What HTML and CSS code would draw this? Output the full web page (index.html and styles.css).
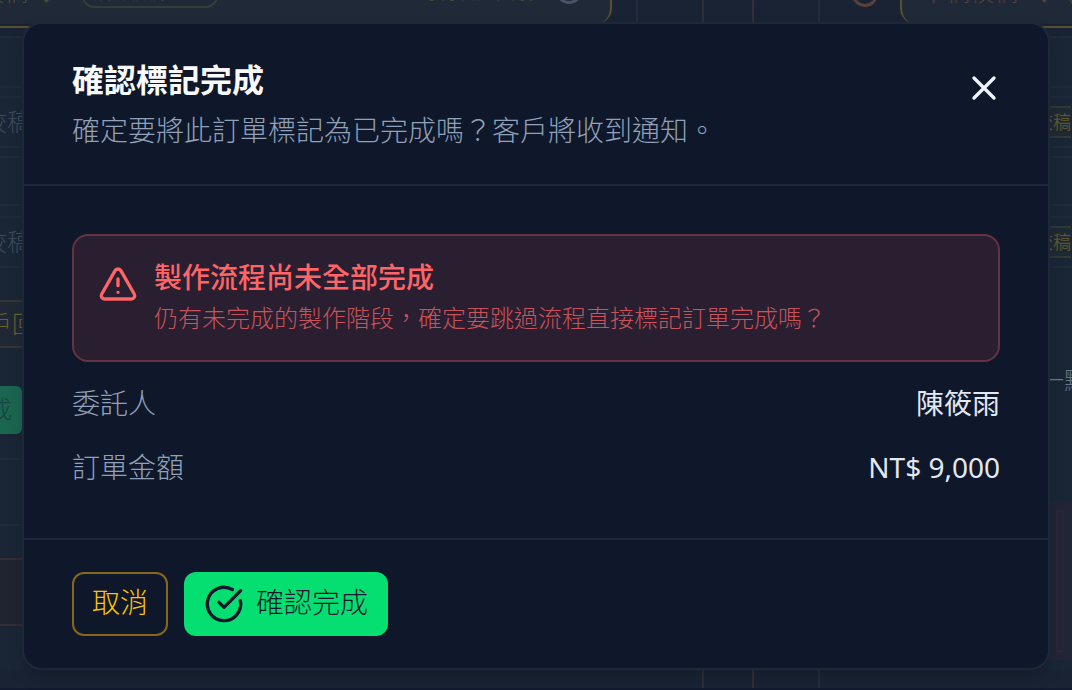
FILE: index.html
```html
<!DOCTYPE html>
<html lang="zh-Hant">
<head>
  <meta charset="UTF-8">
  <meta name="viewport" content="width=device-width, initial-scale=1.0">
  <title>確認標記完成</title>
  <link rel="stylesheet" href="styles.css">
</head>
<body>
  <!-- Order board behind the dialog -->
  <div class="board" aria-hidden="true">
    <div class="board-top">
      <div class="stage-card stage-left">
        <span class="stage-name">校稿 ↓</span>
        <span class="pill">設計校稿：1/1</span>
        <span class="stage-note">等待客戶回覆</span>
        <span class="ring"></span>
      </div>
      <div class="lanes">
        <span class="lane lane-a"></span>
        <span class="lane lane-b"></span>
        <span class="lane lane-c"></span>
        <span class="lane lane-d"></span>
        <span class="ring ring-orange"></span>
      </div>
      <div class="stage-card stage-right">
        <span class="stage-name">下稿校稿</span>
        <span class="stage-name">↓</span>
        <span class="ring ring-olive"></span>
      </div>
    </div>
    <div class="board-middle">
      <div class="side side-left">
        <div class="cell cell-first"></div>
        <div class="cell cell-text">校稿</div>
        <div class="cell"></div>
        <div class="cell cell-text">校稿</div>
        <div class="cell cell-reply">戶回</div>
        <div class="cell-done">成</div>
        <div class="cell cell-notes"></div>
        <div class="cell-brown"></div>
      </div>
      <div class="side side-right">
        <div class="cell cell-first"></div>
        <div class="cell cell-tag"><span>校稿</span></div>
        <div class="cell"></div>
        <div class="cell cell-tag"><span>校稿</span></div>
        <div class="cell-point">一點</div>
        <div class="cell-plum"></div>
      </div>
    </div>
    <div class="board-bottom">
      <span class="lane lane-b"></span>
      <span class="lane lane-c"></span>
      <span class="lane lane-d"></span>
    </div>
  </div>

  <!-- Confirm dialog -->
  <div class="dialog" role="dialog" aria-modal="true" aria-labelledby="dialogTitle" aria-describedby="dialogText">
    <header class="dialog-header">
      <div class="dialog-heading">
        <h2 id="dialogTitle">確認標記完成</h2>
        <p id="dialogText">確定要將此訂單標記為已完成嗎？客戶將收到通知。</p>
      </div>
      <button class="close-button" type="button" aria-label="關閉">
        <svg viewBox="0 0 24 24"><path d="M18 6 6 18M6 6l12 12"/></svg>
      </button>
    </header>

    <div class="dialog-body">
      <div class="alert">
        <svg viewBox="0 0 24 24"><path d="m21.73 18-8-14a2 2 0 0 0-3.48 0l-8 14A2 2 0 0 0 4 21h16a2 2 0 0 0 1.73-3"/><path d="M12 9v4M12 17h.01"/></svg>
        <div>
          <h3>製作流程尚未全部完成</h3>
          <p>仍有未完成的製作階段，確定要跳過流程直接標記訂單完成嗎？</p>
        </div>
      </div>
      <dl class="details">
        <div class="detail-row">
          <dt>委託人</dt>
          <dd>陳筱雨</dd>
        </div>
        <div class="detail-row">
          <dt>訂單金額</dt>
          <dd>NT$ 9,000</dd>
        </div>
      </dl>
    </div>

    <footer class="dialog-footer">
      <button class="btn btn-cancel" type="button"><span>取消</span></button>
      <button class="btn btn-confirm" type="button">
        <svg viewBox="0 0 24 24"><path d="M21.801 10A10 10 0 1 1 17 3.335"/><path d="m9 11 3 3L22 4"/></svg>
        <span>確認完成</span>
      </button>
    </footer>
  </div>
</body>
</html>
```

FILE: styles.css
```css
* {
  box-sizing: border-box;
}
body {
  margin: 0;
  padding: 22px;
  background: #192334;
  color: #e2e8f0;
  font-family: "Noto Sans", "Noto Sans CJK TC", sans-serif;
  font-size: 28px;
  font-weight: 300;
}
h2, h3, p, dl, dt, dd {
  margin: 0;
}
svg {
  fill: none;
  stroke: currentColor;
  stroke-width: 2;
  stroke-linecap: round;
  stroke-linejoin: round;
  flex-shrink: 0;
}

/* Board behind */
.board {
  position: absolute;
  inset: 0;
  overflow: hidden;
  display: flex;
  flex-direction: column;
  color: #3f4b5c;
  font-size: 24px;
  line-height: 32px;
  white-space: nowrap;
}
.board-top {
  display: flex;
  height: 28px;
  border-bottom: 2px solid #5a5030;
}
.stage-card {
  display: flex;
  align-items: flex-end;
  height: 24px;
  padding-bottom: 16px;
  background: #1f2937;
  color: #4b5030;
}
.stage-left {
  width: 612px;
  flex-shrink: 0;
  border-right: 2px solid #5a5030;
  border-radius: 0 0 16px 0;
}
.stage-name {
  width: 82px;
  flex-shrink: 0;
}
.stage-left .stage-name {
  text-indent: -20px;
}
.pill {
  width: 136px;
  padding: 0 9px;
  border: 2px solid #343e38;
  border-radius: 12px;
  color: #3f493b;
  font-size: 18px;
  line-height: 28px;
}
.stage-note {
  flex: 1;
  padding-right: 22px;
  text-align: right;
  font-size: 19px;
}
.ring {
  width: 26px;
  height: 26px;
  margin: 0 28px 4px 0;
  border: 3px solid #48536a;
  border-radius: 50%;
  flex-shrink: 0;
}
.ring-orange {
  margin: -19px 0 0 32px;
  border-color: #58403b;
}
.ring-olive {
  margin: 0 0 0 16px;
  border-color: #343e38;
}
.lanes {
  display: flex;
  width: 288px;
  flex-shrink: 0;
}
.lane {
  border-right: 2px solid #222d3c;
}
.lane-a {
  width: 26px;
}
.lane-b {
  width: 66px;
  border-color: #2c2f38;
}
.lane-c {
  width: 50px;
  border-color: #322f36;
}
.lane-d {
  width: 66px;
}
.stage-right {
  flex: 1;
  padding-left: 20px;
  border-left: 2px solid #5a5030;
  border-radius: 0 0 0 16px;
  color: #58403b;
}
.stage-right .stage-name {
  width: 110px;
}
.stage-right .stage-name + .stage-name {
  width: 20px;
}
.board-middle {
  display: flex;
  flex: 1;
  justify-content: space-between;
  padding-top: 8px;
}
.side {
  width: 24px;
  overflow: hidden;
  background: #1a2636;
}
.side-left {
  padding-right: 2px;
}
.cell {
  height: 50px;
  margin-bottom: 10px;
  border: 2px solid #1f2b3b;
  border-width: 2px 0;
}
.cell-first,
.cell-text,
.cell-tag {
  height: 52px;
  margin-bottom: 8px;
}
.cell-text,
.cell-tag,
.cell-reply {
  display: flex;
  align-items: center;
}
.cell-text {
  text-indent: -17px;
}
.cell-reply {
  height: 48px;
  margin: 32px 0 38px;
  border-color: #363732;
  background: #1f2834;
  color: #6a6030;
  text-indent: -12px;
}
.cell-done {
  height: 48px;
  border-radius: 0 6px 6px 0;
  background: #1b6650;
  color: #17443f;
  line-height: 46px;
  text-indent: -12px;
}
.cell-notes {
  height: 68px;
  margin: 24px 0 32px;
}
.cell-brown {
  height: 68px;
  border: 2px solid #342d33;
  border-width: 2px 0;
  background: #202431;
}
.cell-tag span {
  height: 32px;
  border: 2px solid #303836;
  border-width: 2px 0;
  background: #1f2934;
  color: #5c5430;
  font-size: 18px;
  font-weight: 400;
  line-height: 28px;
  text-indent: -13px;
}
.cell-point {
  margin-top: 96px;
  color: #6a7588;
  text-indent: -8px;
}
.cell-plum {
  height: 158px;
  margin-top: 106px;
  outline: 2px solid #292839;
  outline-offset: -10px;
  background: #222535;
}
.board-bottom {
  display: flex;
  height: 20px;
  padding-left: 638px;
  border-bottom: 2px solid #111a30;
}

/* Dialog */
.dialog {
  position: relative;
  border: 2px solid #1d293a;
  border-radius: 20px;
  background: #0f172a;
  box-shadow: 0 8px 16px rgba(0, 0, 0, 0.15);
}
.dialog-header {
  display: flex;
  justify-content: space-between;
  align-items: flex-start;
  gap: 16px;
  padding: 32px 44px 32px 48px;
  border-bottom: 2px solid #1d293a;
}
.dialog-heading h2 {
  font-size: 32px;
  font-weight: 700;
  line-height: 48px;
  color: #f8fafc;
}
.dialog-heading p {
  margin-top: 4px;
  line-height: 44px;
  color: #90a1b9;
}
.close-button {
  display: flex;
  margin-top: 12px;
  padding: 0;
  border: 0;
  background: none;
  color: #f1f5f9;
  cursor: pointer;
}
.close-button svg {
  width: 40px;
  height: 40px;
}
.dialog-body {
  display: flex;
  flex-direction: column;
  gap: 24px;
  padding: 48px 48px 54px;
}
.alert {
  display: flex;
  gap: 16px;
  padding: 24px;
  border: 2px solid #673340;
  border-radius: 16px;
  background: #291f30;
  color: #ff6467;
}
.alert svg {
  width: 40px;
  height: 40px;
  margin-top: 4px;
}
.alert h3 {
  margin-bottom: 6px;
  font-size: 28px;
  font-weight: 500;
  line-height: 34px;
}
.alert p {
  color: #c9535b;
  font-size: 24px;
  line-height: 36px;
}
.details {
  display: flex;
  flex-direction: column;
  gap: 30px;
}
.detail-row {
  display: flex;
  justify-content: space-between;
  line-height: 34px;
}
.detail-row dt {
  color: #90a1b9;
}
.detail-row dd {
  font-weight: 400;
  color: #e2e8f0;
}
.dialog-footer {
  display: flex;
  gap: 16px;
  padding: 32px 48px;
  border-top: 2px solid #1d293a;
}

/* Buttons */
.btn {
  display: flex;
  align-items: center;
  gap: 12px;
  height: 64px;
  padding: 0 20px;
  border: 0;
  border-radius: 12px;
  font: inherit;
  cursor: pointer;
}
.btn span {
  padding-bottom: 6px;
}
.btn-cancel {
  padding: 0 18px;
  border: 2px solid #87671f;
  background: none;
  color: #fdc700;
}
.btn-confirm {
  background: #05df72;
  color: #0f172a;
}
.btn svg {
  width: 40px;
  height: 40px;
}
```
